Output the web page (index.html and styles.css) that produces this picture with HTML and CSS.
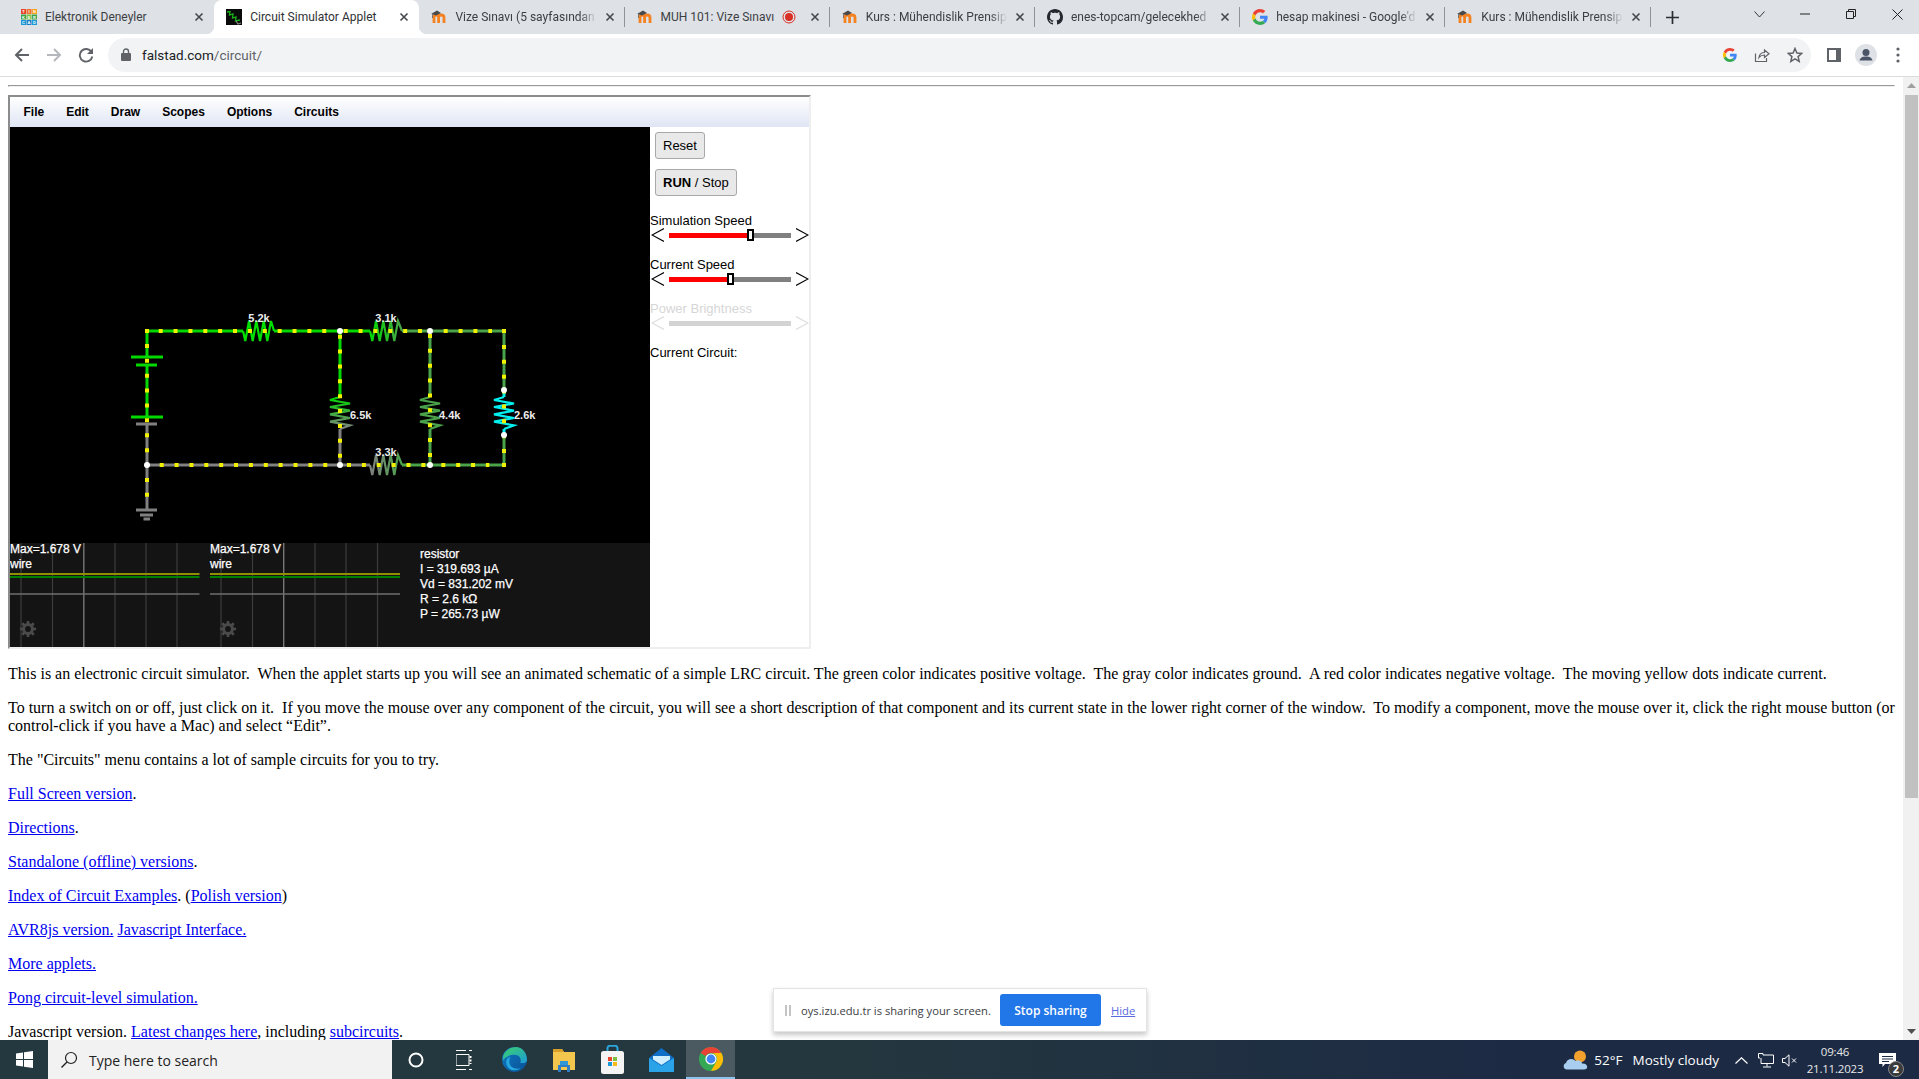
FILE: index.html
```html
<!DOCTYPE html>
<html lang="en">
<head>
<meta charset="utf-8">
<title>Circuit Simulator Applet</title>
<link rel="stylesheet" href="styles.css">
</head>
<body>
<svg class="defs" width="0" height="0" aria-hidden="true">
  <symbol id="ic-moodle" viewBox="0 0 16 16">
    <path d="M3 14V8.500C3 6.800 4 6 5.200 6S7.600 6.800 7.600 8.500V14M7.600 8.500C7.600 6.800 8.800 6 10.200 6S13 6.800 13 8.500V14" fill="none" stroke="#f58220" stroke-width="2.800"/>
    <path d="M0 5L6 1.500 10 4 5 6.500 2 5.400V9H1.300V5.100Z" fill="#4a4a4a"/>
  </symbol>
  <symbol id="ic-g" viewBox="0 0 48 48">
    <path fill="#EA4335" d="M24 9.5c3.54 0 6.71 1.22 9.21 3.6l6.85-6.85C35.9 2.38 30.47 0 24 0 14.62 0 6.51 5.38 2.56 13.22l7.98 6.19C12.43 13.72 17.74 9.5 24 9.5z"/>
    <path fill="#4285F4" d="M46.98 24.55c0-1.57-.15-3.09-.38-4.55H24v9.02h12.94c-.58 2.96-2.26 5.48-4.78 7.18l7.73 6c4.51-4.18 7.09-10.36 7.09-17.65z"/>
    <path fill="#FBBC05" d="M10.53 28.59c-.48-1.45-.76-2.99-.76-4.59s.27-3.14.76-4.59l-7.98-6.19C.92 16.46 0 20.12 0 24c0 3.88.92 7.54 2.56 10.78l7.97-6.19z"/>
    <path fill="#34A853" d="M24 48c6.48 0 11.93-2.13 15.89-5.81l-7.73-6c-2.15 1.45-4.92 2.3-8.16 2.3-6.26 0-11.57-4.22-13.47-9.91l-7.98 6.19C6.51 42.62 14.62 48 24 48z"/>
  </symbol>
  <symbol id="ic-x" viewBox="0 0 10 10">
    <path d="M1.500 1.500L8.500 8.500M8.500 1.500L1.500 8.500" stroke="#45484d" stroke-width="1.600" fill="none"/>
  </symbol>
  <symbol id="ic-gear" viewBox="0 0 20 20">
    <circle cx="10" cy="10" r="5" fill="none" stroke="#4a4a4a" stroke-width="3.400"/>
    <path d="M10 1V19M1 10H19M3.600 3.600L16.400 16.400M16.400 3.600L3.600 16.400" stroke="#4a4a4a" stroke-width="3"/>
    <circle cx="10" cy="10" r="3.200" fill="#141414"/>
  </symbol>
  <symbol id="ic-left" viewBox="0 0 13 14">
    <path d="M13 .5L1 7 13 13.500" fill="none" stroke="currentColor" stroke-width="1.100"/>
  </symbol>
  <symbol id="ic-right" viewBox="0 0 13 14">
    <path d="M0 .5L12 7 0 13.500" fill="none" stroke="currentColor" stroke-width="1.100"/>
  </symbol>
</svg>

<header class="tabstrip">
  <div class="tab">
    <svg class="favicon" viewBox="0 0 16 16">
      <rect width="5" height="5" fill="#e8452c"/><rect x="5.500" width="5" height="5" fill="#f0702a"/><rect x="11" width="5" height="5" fill="#f9a11b"/>
      <rect y="5.500" width="5" height="5" fill="#3fa34a"/><rect x="5.500" y="5.500" width="5" height="5" fill="#7ac143"/><rect x="11" y="5.500" width="5" height="5" fill="#3fa34a"/>
      <rect y="11" width="5" height="5" fill="#1c9ad6"/><rect x="5.500" y="11" width="5" height="5" fill="#1c7fc6"/><rect x="11" y="11" width="5" height="5" fill="#1c9ad6"/>
      <g class="favicon-letters">
        <text x="2.500" y="4">T</text><text x="8" y="4">I</text><text x="13.500" y="4">N</text>
        <text x="2.500" y="9.500">K</text><text x="8" y="9.500">E</text><text x="13.500" y="9.500">R</text>
        <text x="2.500" y="15">C</text><text x="8" y="15">A</text><text x="13.500" y="15">D</text>
      </g>
    </svg>
    <span class="tab-title">Elektronik Deneyler</span>
    <svg class="tab-close"><use href="#ic-x"/></svg>
  </div>
  <div class="tab tab-active">
    <svg class="favicon" viewBox="0 0 16 16">
      <rect width="16" height="16" fill="#0a0a0a"/>
      <path d="M1 3L4 2.500 3.500 6 7 5 6.500 9 10 8 9.500 12 14 11" fill="none" stroke="#19b219" stroke-width="1.300"/>
      <path d="M10 12L12 15 15 14" fill="none" stroke="#888" stroke-width="1.200"/>
    </svg>
    <span class="tab-title">Circuit Simulator Applet</span>
    <svg class="tab-close"><use href="#ic-x"/></svg>
  </div>
  <div class="tab tab-sep">
    <svg class="favicon"><use href="#ic-moodle"/></svg>
    <span class="tab-title tab-fade">Vize Sınavı (5 sayfasından</span>
    <svg class="tab-close"><use href="#ic-x"/></svg>
  </div>
  <div class="tab tab-sep">
    <svg class="favicon"><use href="#ic-moodle"/></svg>
    <span class="tab-title">MUH 101: Vize Sınavı</span>
    <svg class="tab-rec" viewBox="0 0 14 14"><circle cx="7" cy="7" r="6" fill="none" stroke="#d93025" stroke-width="1"/><circle cx="7" cy="7" r="4" fill="#d93025"/></svg>
    <svg class="tab-close"><use href="#ic-x"/></svg>
  </div>
  <div class="tab tab-sep">
    <svg class="favicon"><use href="#ic-moodle"/></svg>
    <span class="tab-title tab-fade">Kurs : Mühendislik Prensip</span>
    <svg class="tab-close"><use href="#ic-x"/></svg>
  </div>
  <div class="tab tab-sep">
    <svg class="favicon" viewBox="0 0 16 16"><path fill="#24292f" d="M8 0C3.58 0 0 3.58 0 8c0 3.54 2.29 6.53 5.47 7.59.4.07.55-.17.55-.38 0-.19-.01-.82-.01-1.49-2.01.37-2.53-.49-2.69-.94-.09-.23-.48-.94-.82-1.13-.28-.15-.68-.52-.01-.53.63-.01 1.08.58 1.23.82.72 1.21 1.87.87 2.33.66.07-.52.28-.87.51-1.07-1.78-.2-3.64-.89-3.64-3.95 0-.87.31-1.59.82-2.15-.08-.2-.36-1.02.08-2.12 0 0 .67-.21 2.2.82.64-.18 1.32-.27 2-.27s1.36.09 2 .27c1.53-1.04 2.2-.82 2.2-.82.44 1.1.16 1.92.08 2.12.51.56.82 1.27.82 2.15 0 3.07-1.87 3.75-3.65 3.95.29.25.54.73.54 1.48 0 1.07-.01 1.93-.01 2.2 0 .21.15.46.55.38A8.01 8.01 0 0 0 16 8c0-4.42-3.58-8-8-8z"/></svg>
    <span class="tab-title tab-fade">enes-topcam/gelecekhed</span>
    <svg class="tab-close"><use href="#ic-x"/></svg>
  </div>
  <div class="tab tab-sep">
    <svg class="favicon"><use href="#ic-g"/></svg>
    <span class="tab-title tab-fade">hesap makinesi - Google'd</span>
    <svg class="tab-close"><use href="#ic-x"/></svg>
  </div>
  <div class="tab tab-sep">
    <svg class="favicon"><use href="#ic-moodle"/></svg>
    <span class="tab-title tab-fade">Kurs : Mühendislik Prensip</span>
    <svg class="tab-close"><use href="#ic-x"/></svg>
  </div>
  <div class="new-tab"><svg width="13" height="13" viewBox="0 0 13 13"><path d="M6.500 0V13M0 6.500H13" stroke="#2b2d30" stroke-width="1.700"/></svg></div>
  <div class="win-controls">
    <div class="win-btn"><svg width="11" height="7" viewBox="0 0 11 7"><path d="M.5 .5L5.500 6 10.500 .5" fill="none" stroke="#333" stroke-width="1"/></svg></div>
    <div class="win-btn"><svg width="10" height="2" viewBox="0 0 10 2"><path d="M0 1H10" stroke="#222" stroke-width="1"/></svg></div>
    <div class="win-btn"><svg width="10" height="10" viewBox="0 0 10 10"><path d="M.5 2.500H7.500V9.500H.5ZM2.500 2.500V.5H9.500V7.500H7.500" fill="none" stroke="#222" stroke-width="1"/></svg></div>
    <div class="win-btn"><svg width="11" height="11" viewBox="0 0 11 11"><path d="M.5 .5L10.500 10.500M10.500 .5L.5 10.500" stroke="#222" stroke-width="1"/></svg></div>
  </div>
</header>

<nav class="toolbar">
  <div class="tool-btn"><svg width="16" height="16" viewBox="0 0 16 16"><path d="M15 8H2M8 2L2 8 8 14" fill="none" stroke="#5f6368" stroke-width="2"/></svg></div>
  <div class="tool-btn"><svg width="16" height="16" viewBox="0 0 16 16"><path d="M1 8H14M8 2L14 8 8 14" fill="none" stroke="#b4b7bb" stroke-width="2"/></svg></div>
  <div class="tool-btn"><svg width="16" height="16" viewBox="0 0 16 16"><path d="M13.500 5A6.300 6.300 0 1 0 14.300 9.500" fill="none" stroke="#5f6368" stroke-width="1.900"/><path d="M15 1V7H9Z" fill="#5f6368"/></svg></div>
  <div class="omnibox">
    <svg class="lock" width="10" height="13" viewBox="0 0 10 13"><path d="M2.500 6V3.500A2.500 2.500 0 0 1 7.500 3.500V6" fill="none" stroke="#5f6368" stroke-width="1.400"/><rect y="5" width="10" height="8" rx="1" fill="#5f6368"/></svg>
    <span class="url"><span class="url-host">falstad.com</span>/circuit/</span>
    <div class="omni-icons">
      <div class="omni-btn"><svg width="14" height="14"><use href="#ic-g"/></svg></div>
      <div class="omni-btn"><svg width="16" height="16" viewBox="0 0 16 16"><path d="M1.500 6.500V14.500H12.500V11M5 10.500C5.500 7 8 5.500 10.500 5.500V3L15 6.800 10.500 10.500V8C8 8 6.300 8.800 5 10.500Z" fill="none" stroke="#5f6368" stroke-width="1.200"/></svg></div>
      <div class="omni-btn"><svg width="16" height="16" viewBox="0 0 16 16"><path d="M8 1.500L9.900 6 14.800 6.400 11.100 9.600 12.200 14.400 8 11.900 3.800 14.400 4.900 9.600 1.200 6.400 6.100 6Z" fill="none" stroke="#5f6368" stroke-width="1.500"/></svg></div>
    </div>
  </div>
  <div class="tool-btn tool-side"><svg width="14" height="14" viewBox="0 0 14 14"><rect x="1" y="1" width="12" height="12" fill="#fff" stroke="#5f6368" stroke-width="2"/><rect x="9" y="1" width="4" height="12" fill="#5f6368"/></svg></div>
  <div class="tool-btn"><svg width="22" height="22" viewBox="0 0 22 22"><circle cx="11" cy="11" r="11" fill="#dee1e6"/><circle cx="11" cy="8.500" r="3.500" fill="#4a5568"/><path d="M4.500 16.500C5.500 13 8 12.500 11 12.500S16.500 13 17.500 16.500Z" fill="#4a5568"/></svg></div>
  <div class="tool-btn"><svg width="4" height="16" viewBox="0 0 4 16"><circle cx="2" cy="2" r="1.600" fill="#5f6368"/><circle cx="2" cy="8" r="1.600" fill="#5f6368"/><circle cx="2" cy="14" r="1.600" fill="#5f6368"/></svg></div>
</nav>

<div class="viewport">
  <main class="page">
    <hr>
    <section class="sim">
      <div class="sim-menu">
        <span class="sim-menu-item">File</span>
        <span class="sim-menu-item">Edit</span>
        <span class="sim-menu-item">Draw</span>
        <span class="sim-menu-item">Scopes</span>
        <span class="sim-menu-item">Options</span>
        <span class="sim-menu-item">Circuits</span>
      </div>
      <div class="sim-body">
        <svg class="sim-canvas" viewBox="10 127 640 520" width="640" height="520">
          <rect x="10" y="127" width="640" height="520" fill="#000"/>

          <g fill="none" stroke-width="3">
            <path d="M147 357V331H243M274 331H370M340 331V397" stroke="#00d800"/>
            <path d="M402 331H504V390M430 331V397M430 429V465M402 465H504V435" stroke="#4aa34a"/>
            <path d="M147 365V417" stroke="#00d800"/>
            <path d="M147 424V510M147 465H370M340 429V465" stroke="#808080"/>
            <path d="M504 390V397M504 429V435" stroke="#00f0f0"/>
          </g>

          <g fill="none" stroke-width="3">
            <path d="M131 357H163M136 365H157M131 417H163" stroke="#00d800"/>
            <path d="M136 424H157M136 510H157M140 515H153M143.500 519H150" stroke="#808080"/>
          </g>

          <defs>
            <linearGradient id="g-r2" gradientUnits="userSpaceOnUse" x1="370" x2="402" y1="0" y2="0"><stop offset="0" stop-color="#00d800"/><stop offset="1" stop-color="#4aa34a"/></linearGradient>
            <linearGradient id="g-r3" gradientUnits="userSpaceOnUse" x1="370" x2="402" y1="0" y2="0"><stop offset="0" stop-color="#808080"/><stop offset="1" stop-color="#4aa34a"/></linearGradient>
            <linearGradient id="g-r4" gradientUnits="userSpaceOnUse" x1="0" x2="0" y1="397" y2="429"><stop offset="0" stop-color="#00d800"/><stop offset="1" stop-color="#808080"/></linearGradient>
          </defs>
          <g fill="none" stroke-width="2.200">
            <polyline stroke="#00e000" points="243,331 245.300,341 249,321 252.700,341 256.300,321 260,341 263.700,321 267.300,341 271,321 274,331"/>
            <polyline stroke="url(#g-r2)" points="370,331 372.300,341 376,321 379.700,341 383.300,321 387,341 390.700,321 394.300,341 398,321 402,331"/>
            <polyline stroke="url(#g-r3)" points="370,465 372.300,475 376,455 379.700,475 383.300,455 387,475 390.700,455 394.300,475 398,455 402,465"/>
            <polyline stroke="url(#g-r4)" points="340,397 330,400 350,403.500 330,407 350,410.700 330,414.400 350,418 330,421.700 350,425.400 340,429"/>
            <polyline stroke="#4aa34a" points="430,397 420,400 440,403.500 420,407 440,410.700 420,414.400 440,418 420,421.700 440,425.400 430,429"/>
            <polyline stroke="#00f0f0" points="504,397 494,400 514,403.500 494,407 514,410.700 494,414.400 514,418 494,421.700 514,425.400 504,429"/>
          </g>

          <g fill="none" stroke="#f0f000" stroke-width="4" stroke-dasharray="4 10.870">
            <path d="M158.700 331H327M343.700 331H423M443.700 331H492M504 345V453"/>
            <path d="M441.300 465H489.300M347 465H425.500M159.700 465H327.500"/>
            <path d="M147 344V437.700M147 478V497M340 334.700V458M430 334V457"/>
            <path d="M145 331H149M502 331H506M502 465H506M147 448.300V452.300" stroke-dasharray="none"/>
          </g>

          <g fill="#fff">
            <circle cx="340" cy="331" r="3"/><circle cx="430" cy="331" r="3"/>
            <circle cx="147" cy="465" r="3"/><circle cx="340" cy="465" r="3"/><circle cx="430" cy="465" r="3"/>
            <circle cx="504" cy="390" r="3"/><circle cx="504" cy="435" r="3"/>
          </g>

          <g class="value-label">
            <text x="259" y="322" text-anchor="middle">5.2k</text>
            <text x="386" y="322" text-anchor="middle">3.1k</text>
            <text x="386" y="456" text-anchor="middle">3.3k</text>
            <text x="350" y="419">6.5k</text>
            <text x="439" y="419">4.4k</text>
            <text x="514" y="419">2.6k</text>
          </g>

          <rect x="10" y="543" width="640" height="104" fill="#141414"/>
          <path d="M21 543V647M52.500 543V647M115 543V647M146 543V647M177 543V647M221 543V647M252.500 543V647M315 543V647M346 543V647M377.500 543V647" stroke="#3c3c3c" stroke-width="1.200"/>
          <path d="M83.800 543V647M283.700 543V647" stroke="#777" stroke-width="1.400"/>
          <path d="M10 594H199.500M210 594H400" stroke="#6e6e6e" stroke-width="1.500"/>
          <path d="M10 574H199.500M210 574H400" stroke="#8f8f00" stroke-width="2"/>
          <path d="M10 577H199.500M210 577H400" stroke="#008000" stroke-width="2"/>
          <use href="#ic-gear" x="19" y="620" width="18" height="18"/>
          <use href="#ic-gear" x="219" y="620" width="18" height="18"/>
          <g class="scope-text">
            <text x="10" y="553">Max=1.678 V</text>
            <text x="10" y="568">wire</text>
            <text x="210" y="553">Max=1.678 V</text>
            <text x="210" y="568">wire</text>
            <text x="420" y="558">resistor</text>
            <text x="420" y="573">I = 319.693 µA</text>
            <text x="420" y="588">Vd = 831.202 mV</text>
            <text x="420" y="603">R = 2.6 kΩ</text>
            <text x="420" y="618">P = 265.73 µW</text>
          </g>
        </svg>
        <aside class="sim-side">
          <button class="sim-btn" type="button">Reset</button>
          <button class="sim-btn" type="button"><b>RUN</b> / Stop</button>
          <div class="ctl">
            <div class="ctl-label">Simulation Speed</div>
            <div class="slider">
              <svg class="slider-arrow"><use href="#ic-left"/></svg>
              <div class="slider-track"><div class="slider-fill" style="width:67%"><span class="slider-thumb"></span></div></div>
              <svg class="slider-arrow"><use href="#ic-right"/></svg>
            </div>
          </div>
          <div class="ctl">
            <div class="ctl-label">Current Speed</div>
            <div class="slider">
              <svg class="slider-arrow"><use href="#ic-left"/></svg>
              <div class="slider-track"><div class="slider-fill" style="width:50%"><span class="slider-thumb"></span></div></div>
              <svg class="slider-arrow"><use href="#ic-right"/></svg>
            </div>
          </div>
          <div class="ctl ctl-disabled">
            <div class="ctl-label">Power Brightness</div>
            <div class="slider">
              <svg class="slider-arrow"><use href="#ic-left"/></svg>
              <div class="slider-track"></div>
              <svg class="slider-arrow"><use href="#ic-right"/></svg>
            </div>
          </div>
          <div class="ctl-label">Current Circuit:</div>
        </aside>
      </div>
    </section>

    <p>This is an electronic circuit simulator.&nbsp; When the applet starts up you will see an animated schematic of a simple LRC circuit. The green color indicates positive voltage.&nbsp; The gray color indicates ground.&nbsp; A red color indicates negative voltage.&nbsp; The moving yellow dots indicate current.</p>
    <p>To turn a switch on or off, just click on it.&nbsp; If you move the mouse over any component of the circuit, you will see a short description of that component and its current state in the lower right corner of the window.&nbsp; To modify a component, move the mouse over it, click the right mouse button (or control-click if you have a Mac) and select “Edit”.</p>
    <p>The "Circuits" menu contains a lot of sample circuits for you to try.</p>
    <p><a href="#">Full Screen version</a>.</p>
    <p><a href="#">Directions</a>.</p>
    <p><a href="#">Standalone (offline) versions</a>.</p>
    <p><a href="#">Index of Circuit Examples</a>. (<a href="#">Polish version</a>)</p>
    <p><a href="#">AVR8js version.</a> <a href="#">Javascript Interface.</a></p>
    <p><a href="#">More applets.</a></p>
    <p><a href="#">Pong circuit-level simulation.</a></p>
    <p>Javascript version. <a href="#">Latest changes here</a>, including <a href="#">subcircuits</a>.</p>
  </main>
  <div class="scrollbar">
    <div class="sb-arrow"><svg width="9" height="5" viewBox="0 0 9 5"><path d="M4.500 0L9 5H0Z" fill="#a0a0a0"/></svg></div>
    <div class="sb-track"><div class="sb-thumb"></div></div>
    <div class="sb-arrow"><svg width="9" height="5" viewBox="0 0 9 5"><path d="M0 0H9L4.500 5Z" fill="#505050"/></svg></div>
  </div>
  <div class="share-bar">
    <span class="share-grip"></span>
    <span class="share-text">oys.izu.edu.tr is sharing your screen.</span>
    <button class="share-stop" type="button">Stop sharing</button>
    <a class="share-hide" href="#">Hide</a>
  </div>
</div>

<footer class="taskbar">
  <div class="start"><svg width="17" height="17" viewBox="0 0 17 17"><path d="M0 2.500L7 1.500V8H0ZM8 1.300L17 0V8H8ZM0 9H7V15.500L0 14.500ZM8 9H17V17L8 15.700Z" fill="#fff"/></svg></div>
  <div class="search">
    <svg width="18" height="18" viewBox="0 0 18 18"><circle cx="11" cy="7" r="5.500" fill="none" stroke="#222" stroke-width="1.200"/><path d="M7 11L1.500 16.500" stroke="#222" stroke-width="1.400"/></svg>
    <span class="search-text">Type here to search</span>
  </div>
  <div class="tb-cell tb-narrow"><svg width="16" height="16" viewBox="0 0 16 16"><circle cx="8" cy="8" r="6.500" fill="none" stroke="#fff" stroke-width="2"/></svg></div>
  <div class="tb-cell tb-narrow"><svg width="16" height="20" viewBox="0 0 16 20"><path d="M0 .5H10M0 19.500H10M0 4.500H13V15.500H0ZM13 .5H16M13 19.500H16" fill="none" stroke="#fff" stroke-width="1"/><path d="M14.500 6V14" stroke="#fff" stroke-width="2" stroke-dasharray="2 1.500"/></svg></div>
  <div class="tb-cell tb-gap"><svg width="25" height="25" viewBox="0 0 24 24">
      <defs>
        <linearGradient id="edge-a" x1="0" x2="1" y1="0" y2="1"><stop offset="0" stop-color="#3bd06a"/><stop offset="1" stop-color="#1d9bd8"/></linearGradient>
        <linearGradient id="edge-b" x1="0" x2="1" y1="0" y2="1"><stop offset="0" stop-color="#0f7bc4"/><stop offset="1" stop-color="#0b4f94"/></linearGradient>
      </defs>
      <circle cx="12" cy="12" r="12" fill="url(#edge-b)"/>
      <path d="M1 9C3 2 10 0 14 0C20 .5 24 6 24 12.500C24 15.500 20 16 17.500 15C19 12 17 7.500 12 7.500C7 7.500 2.500 10 1 13Z" fill="url(#edge-a)"/>
      <path d="M7 14C7 19 12 22 18 20.500C14 24 4 23 4 14.500C4 11.500 6 10 8 9.500C7.300 11 7 12.500 7 14Z" fill="#25a8e0"/>
    </svg></div>
  <div class="tb-cell"><svg width="22" height="24" viewBox="0 0 22 24"><path d="M0 1H9L11 4H22V22H0Z" fill="#f3c64e"/><path d="M0 1H9L11 4H0Z" fill="#d99f2b"/><rect x="7" y="13" width="8" height="5" fill="#2f97d8"/><path d="M5 24V17H17V24H14V19H8V24Z" fill="#2f7dc4"/></svg></div>
  <div class="tb-cell"><svg width="23" height="29" viewBox="0 0 23 29"><path d="M6.500 8V3A2.500 2.500 0 0 1 9 .8H14A2.500 2.500 0 0 1 16.500 3V8" fill="none" stroke="#29a8e0" stroke-width="2"/><rect y="6" width="23" height="23" rx="2.500" fill="#f4f4f4"/><rect x="7" y="12" width="4" height="4" fill="#e8452c"/><rect x="12" y="12" width="4" height="4" fill="#7ac143"/><rect x="7" y="17" width="4" height="4" fill="#1c9ad6"/><rect x="12" y="17" width="4" height="4" fill="#f9b81b"/></svg></div>
  <div class="tb-cell"><svg width="25" height="24" viewBox="0 0 25 24"><path d="M0 10L12.500 0 25 10V24H0Z" fill="#0f6fc6"/><path d="M0 10L12.500 18 25 10V24H0Z" fill="#2aa3e8"/><path d="M4 8H21V11.500L12.500 17 4 11.500Z" fill="#cfeeff"/></svg></div>
  <div class="tb-cell tb-active"><svg width="24" height="24" viewBox="0 0 24 24">
      <circle cx="12" cy="12" r="12" fill="#34a853"/>
      <path d="M12 0A12 12 0 0 1 22.400 6H12A6 6 0 0 0 6.800 9L1.600 6A12 12 0 0 1 12 0Z" fill="#ea4335"/>
      <path d="M22.400 6A12 12 0 0 1 12 24L17.200 15A6 6 0 0 0 17.200 9 6 6 0 0 0 12 6Z" fill="#fbbc05"/>
      <circle cx="12" cy="12" r="5.600" fill="#fff"/><circle cx="12" cy="12" r="4.400" fill="#4285f4"/>
    </svg></div>
  <div class="tray">
    <svg class="tray-weather" width="25" height="20" viewBox="0 0 25 20"><circle cx="17" cy="6.500" r="6" fill="#f2a12e"/><path d="M4 19.500C0 19.500 -.5 14 3 13C4 8.500 10 7.500 12.500 11C17 9.500 19 12 19 13.500C25 13 26 19.500 21 19.500Z" fill="#a9cdee"/></svg>
    <span class="tray-temp">52°F</span>
    <span class="tray-cond">Mostly cloudy</span>
    <svg class="tray-chevron" width="13" height="7" viewBox="0 0 13 7"><path d="M.5 6.500L6.500 .8 12.500 6.500" fill="none" stroke="#fff" stroke-width="1.200"/></svg>
    <svg class="tray-net" width="16" height="15" viewBox="0 0 16 15"><path d="M2 5H.5V.5H5V2H15.500V10.500H3V5M9 10.500V13.500M5 14H13" fill="none" stroke="#fff" stroke-width="1"/></svg>
    <svg class="tray-vol" width="15" height="13" viewBox="0 0 15 13"><path d="M.5 4.500H3L7 .8V12.200L3 8.500H.5Z" fill="none" stroke="#fff" stroke-width="1"/><path d="M10 4.500L14 8.500M14 4.500L10 8.500" stroke="#fff" stroke-width="1"/></svg>
    <div class="clock"><span>09:46</span><span>21.11.2023</span></div>
    <div class="notify">
      <svg width="17" height="15" viewBox="0 0 17 15"><path d="M0 0H17V11H6L3.500 14V11H0Z" fill="#fff"/><path d="M3 3.500H14M3 6H14M3 8.500H10" stroke="#1c2a44" stroke-width="1"/></svg>
      <span class="notify-badge">2</span>
    </div>
  </div>
</footer>
</body>
</html>
```

FILE: styles.css
```css
* { box-sizing: border-box; }

html, body { height: 100%; }

body {
  margin: 0;
  display: flex;
  flex-direction: column;
  overflow: hidden;
  background: #fff;
  font-family: "Liberation Serif", serif;
  font-size: 16px;
  color: #000;
}

.defs { position: absolute; }

/* ---------- tab strip ---------- */
.tabstrip {
  flex: none;
  height: 34px;
  display: flex;
  padding-left: 9px;
  background: #dee1e6;
  font-family: Roboto, "Liberation Sans", sans-serif;
  font-size: 12px;
  color: #3c4043;
}

.tab {
  position: relative;
  width: 205.2px;
  display: flex;
  align-items: center;
  padding: 0 10px 0 12px;
}

.tab-active {
  background: #fff;
  border-radius: 8px 8px 0 0;
  color: #303134;
}

.tab-active::before,
.tab-active::after {
  content: "";
  position: absolute;
  bottom: 0;
  width: 8px;
  height: 8px;
}

.tab-active::before {
  left: -8px;
  background: radial-gradient(circle at 0 0, transparent 8px, #fff 8.5px);
}

.tab-active::after {
  right: -8px;
  background: radial-gradient(circle at 100% 0, transparent 8px, #fff 8.5px);
}

.tab-sep::after {
  content: "";
  position: absolute;
  right: 0;
  top: 7px;
  width: 1px;
  height: 20px;
  background: #8f9296;
}

.favicon {
  flex: none;
  width: 16px;
  height: 16px;
  margin-right: 8px;
}

.favicon-letters text {
  font-family: "Liberation Sans", sans-serif;
  font-size: 4px;
  font-weight: bold;
  fill: #fff;
  text-anchor: middle;
}

.tab-title {
  flex: 1;
  min-width: 0;
  white-space: nowrap;
}

.tab-fade {
  -webkit-mask-image: linear-gradient(to right, #000 88%, transparent 100%);
  mask-image: linear-gradient(to right, #000 88%, transparent 100%);
}

.tab-rec {
  flex: none;
  width: 14px;
  height: 14px;
  margin-right: 6px;
}

.tab-close {
  flex: none;
  width: 10px;
  height: 10px;
  margin-left: 8px;
}

.new-tab {
  width: 24px;
  margin-left: 10px;
  display: flex;
  align-items: center;
  justify-content: center;
}

.win-controls {
  margin-left: auto;
  margin-right: -1px;
  display: flex;
  height: 28px;
}

.win-btn {
  width: 46px;
  display: flex;
  align-items: center;
  justify-content: center;
}

/* ---------- toolbar ---------- */
.toolbar {
  flex: none;
  height: 43px;
  display: flex;
  align-items: center;
  padding: 0 5px 1px 6px;
  background: #fff;
  border-bottom: 1px solid #dadce0;
}

.tool-btn {
  flex: none;
  width: 32px;
  height: 34px;
  display: flex;
  align-items: center;
  justify-content: center;
}

.tool-side { margin-left: 7px; }

.omnibox {
  flex: 1;
  height: 34px;
  margin-left: 6px;
  display: flex;
  align-items: center;
  padding-left: 13px;
  border-radius: 17px;
  background: #f1f3f4;
  font-family: Roboto, "Liberation Sans", sans-serif;
  font-size: 13.500px;
  color: #5f6368;
}

.lock { flex: none; margin-right: 11px; }

.url-host { color: #202124; }

.omni-icons {
  margin-left: auto;
  display: flex;
}

.omni-btn {
  width: 32.500px;
  display: flex;
  align-items: center;
  justify-content: center;
}

/* ---------- page ---------- */
.viewport {
  position: relative;
  flex: 1;
  min-height: 0;
  display: flex;
}

.page {
  flex: 1;
  min-width: 0;
  padding: 8px;
  overflow: hidden;
}

.page hr {
  margin: 0 0 8px;
}

.page a { color: #0000ee; }

.sim {
  width: 803px;
  display: flex;
  flex-direction: column;
  border: 2px solid;
  border-color: #8c8c8c #eeeeee #eeeeee #8c8c8c;
  font-family: "Liberation Sans", sans-serif;
}

.sim-menu {
  height: 30px;
  display: flex;
  align-items: center;
  padding-left: 2.500px;
  background: linear-gradient(#ffffff, #dfe5f4);
  font-size: 12px;
  font-weight: bold;
}

.sim-menu-item { padding: 0 11px; }

.sim-body { display: flex; }

.sim-canvas { flex: none; display: block; }

.value-label text {
  font-family: "Liberation Sans", sans-serif;
  font-size: 11px;
  font-weight: bold;
  fill: #ececec;
}

.scope-text text {
  font-family: "Liberation Sans", sans-serif;
  font-size: 12px;
  fill: #fff;
  stroke: #fff;
  stroke-width: .25px;
}

.sim-side {
  flex: 1;
  display: flex;
  flex-direction: column;
  align-items: flex-start;
  font-size: 13px;
}

.sim-btn {
  margin: 5px 0 5px 5px;
  height: 27px;
  padding: 0 7px;
  border: 1px solid #a8a8a8;
  border-radius: 3px;
  background: #e9e9e9;
  font-family: "Liberation Sans", sans-serif;
  font-size: 13px;
  color: #000;
}

.sim-btn + .sim-btn { margin-top: 5px; margin-bottom: 17px; }

.ctl {
  width: 100%;
  margin-bottom: 15px;
}

.ctl-label {
  height: 15px;
  line-height: 15px;
}

.slider {
  height: 14px;
  display: flex;
  align-items: center;
  padding-left: 1px;
  color: #000;
}

.slider-arrow {
  flex: none;
  width: 13px;
  height: 14px;
}

.slider-track {
  width: 122px;
  height: 5px;
  margin: 0 5px;
  background: #808080;
}

.slider-fill {
  position: relative;
  height: 100%;
  background: #f00;
}

.slider-thumb {
  position: absolute;
  right: -3.500px;
  top: -3.500px;
  width: 7px;
  height: 12px;
  border: 2px solid #000;
  background: #fff;
}

.ctl-disabled .ctl-label { color: #d6d6d6; }
.ctl-disabled .slider { color: #dcdcdc; }
.ctl-disabled .slider-track { background: #d3d3d3; }

/* ---------- scrollbar ---------- */
.scrollbar {
  flex: none;
  width: 16px;
  display: flex;
  flex-direction: column;
  background: #f1f1f1;
}

.sb-arrow {
  flex: none;
  height: 17px;
  display: flex;
  align-items: center;
  justify-content: center;
}

.sb-track {
  flex: 1;
  padding: 1px 1px 0 2px;
}

.sb-thumb {
  height: 703px;
  background: #c1c1c1;
}

/* ---------- sharing bar ---------- */
.share-bar {
  position: absolute;
  left: 773px;
  top: 911px;
  width: 374px;
  height: 44px;
  display: flex;
  align-items: center;
  padding-left: 11px;
  background: #fff;
  border: 1px solid #e4e4e4;
  box-shadow: 0 3px 5px rgba(0, 0, 0, .22);
  font-family: "Open Sans", sans-serif;
  font-size: 11.200px;
  color: #3c4043;
}

.share-grip {
  flex: none;
  width: 6px;
  height: 11px;
  margin-right: 10px;
  border-left: 2px solid #c4c4c4;
  border-right: 2px solid #c4c4c4;
}

.share-text { width: 199px; white-space: nowrap; }

.share-stop {
  flex: none;
  width: 101px;
  height: 32px;
  border: 0;
  border-radius: 3px;
  background: #2277e8;
  color: #fff;
  font-family: "Open Sans", sans-serif;
  font-size: 12px;
  font-weight: 600;
}

.share-hide {
  margin-left: 10px;
  color: #5a6ae0;
}

/* ---------- taskbar ---------- */
.taskbar {
  flex: none;
  height: 39px;
  display: flex;
  align-items: center;
  background: linear-gradient(to right, #24383f, #24373f 45%, #1c2a44 80%);
  font-family: "Open Sans", sans-serif;
  color: #fff;
}

.start {
  flex: none;
  width: 48px;
  display: flex;
  justify-content: center;
}

.search {
  flex: none;
  width: 344px;
  height: 100%;
  display: flex;
  align-items: center;
  gap: 11px;
  padding: 1px 0 0 12px;
  background: #f2f2f2;
  color: #222;
  font-size: 14px;
}

.tb-cell {
  flex: none;
  width: 49px;
  height: 100%;
  display: flex;
  align-items: center;
  justify-content: center;
}

.tb-narrow { width: 48px; }
.tb-gap { margin-left: 2px; }

.tb-active {
  background: #4a5a60;
  border-bottom: 2px solid #8cc4ee;
}

.tray {
  margin-left: auto;
  height: 100%;
  display: flex;
  align-items: center;
  padding-top: 1px;
  font-size: 13.500px;
}

.tray-temp { margin-left: 6px; }
.tray-cond { margin-left: 10px; }
.tray-chevron { margin-left: 16px; }
.tray-net { margin-left: 10px; }
.tray-vol { margin-left: 8px; }

.clock {
  width: 76px;
  display: flex;
  flex-direction: column;
  align-items: center;
  font-size: 11.500px;
  letter-spacing: -.2px;
  line-height: 17px;
  color: #e8e8e8;
}

.notify {
  position: relative;
  width: 46px;
  height: 100%;
  display: flex;
  align-items: center;
  padding-left: 6px;
}

.notify-badge {
  position: absolute;
  left: 15px;
  top: 20px;
  width: 16px;
  height: 16px;
  border-radius: 50%;
  background: #3a3a3a;
  border: 1px solid #888;
  font-size: 11px;
  font-weight: 700;
  line-height: 14px;
  text-align: center;
}
```
